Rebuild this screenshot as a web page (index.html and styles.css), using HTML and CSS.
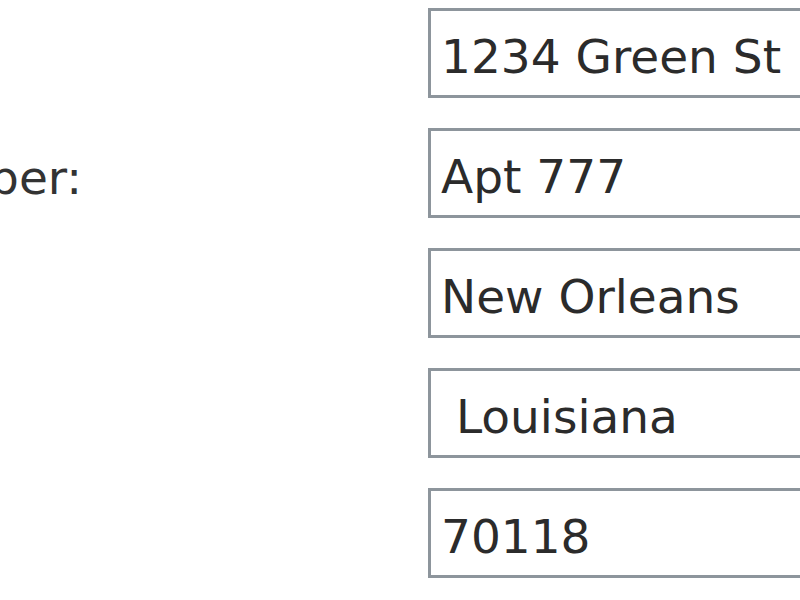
FILE: index.html
```html
<!DOCTYPE html>
<html>
<head>
<meta charset="utf-8">
<link rel="stylesheet" href="styles.css">
</head>
<body>
<form class="form">
  <div class="row"><label class="label">Street Address:</label><input class="field" type="text" value="1234 Green St"></div>
  <div class="row"><label class="label">Apartment Number:</label><input class="field" type="text" value="Apt 777"></div>
  <div class="row"><label class="label">City:</label><input class="field" type="text" value="New Orleans"></div>
  <div class="row"><label class="label">State:</label><input class="field" type="text" value=" Louisiana"></div>
  <div class="row"><label class="label">Zip Code:</label><input class="field" type="text" value="70118"></div>
</form>
</body>
</html>
```
FILE: styles.css
```css
html, body {
  margin: 0;
  padding: 0;
  background: #ffffff;
  overflow: hidden;
}
.form {
  margin-left: -388px;
  padding-top: 8px;
  display: flex;
  flex-direction: column;
  gap: 30px;
  font-family: "DejaVu Sans", Verdana, sans-serif;
}
.row {
  display: grid;
  grid-template-columns: 816px 600px;
  align-items: center;
}
.label {
  font-size: 47px;
  color: #333333;
  white-space: nowrap;
  overflow: hidden;
  padding-top: 8px;
}
.field {
  box-sizing: border-box;
  height: 90px;
  width: 600px;
  margin: 0;
  border: 3px solid #8d959c;
  background: #ffffff;
  padding: 6px 0 0 10px;
  font-family: "DejaVu Sans", Verdana, sans-serif;
  font-size: 47px;
  color: #2b2b2b;
  outline: none;
}
```
